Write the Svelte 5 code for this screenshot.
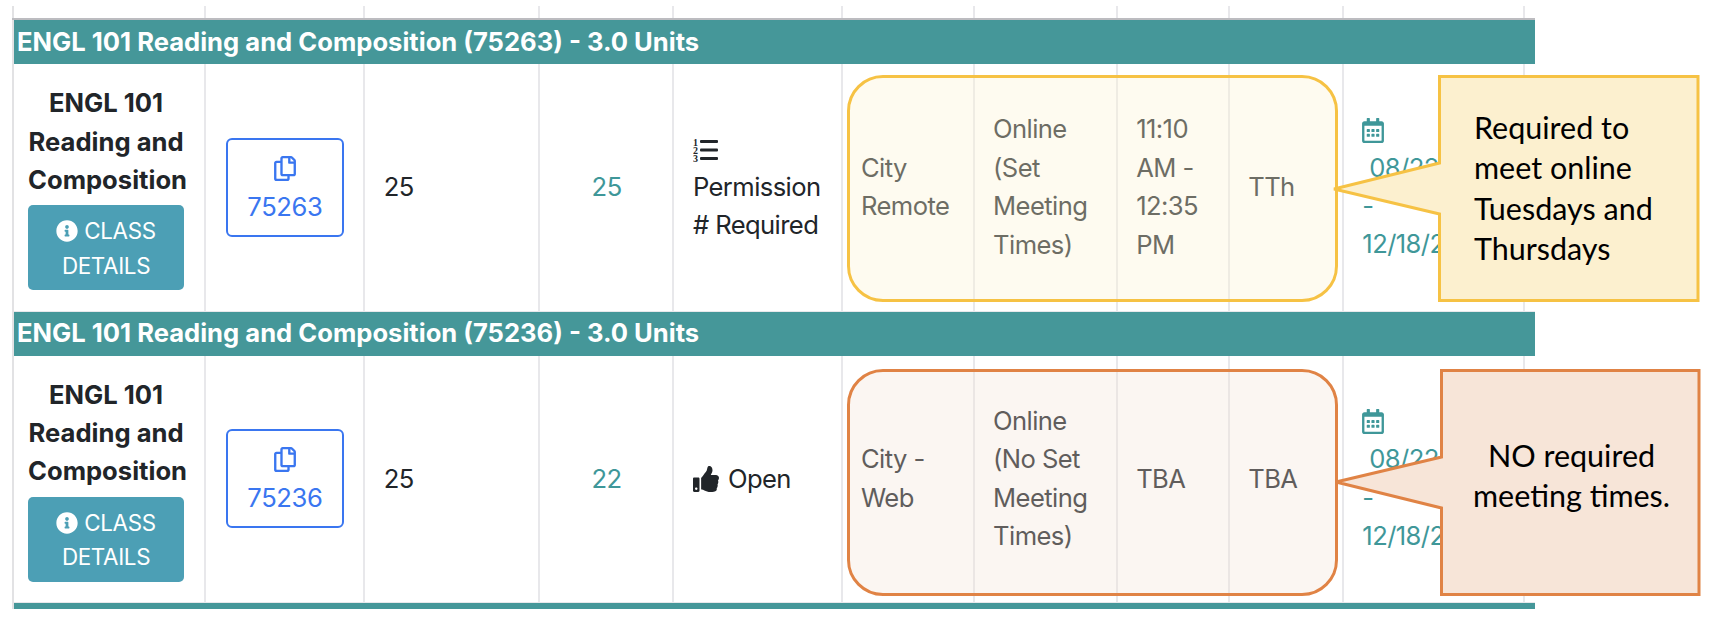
<script>
  const sections = [
    {
      crn: '75263', seats: 25, left: 25, status: 'permission',
      campus: 'City Remote', method: 'Online (Set Meeting Times)', time: '11:10 AM - 12:35 PM', days: 'TTh'
    },
    {
      crn: '75236', seats: 25, left: 22, status: 'open',
      campus: 'City - Web', method: 'Online (No Set Meeting Times)', time: 'TBA', days: 'TBA'
    }
  ]
  const columns = [192, 159, 175, 134, 168, 132, 143, 112, 114, 181, 11]
</script>

{#snippet title(crn)}
  <tr class="title"><td colspan="11">ENGL 101 Reading and Composition ({crn}) - 3.0 Units</td></tr>
{/snippet}

<div class="page">
  <table>
    <colgroup>
      {#each columns as w}<col style="width: {w}px" />{/each}
    </colgroup>
    <tbody>
      <tr class="strip">
        {#each columns as _}<td></td>{/each}
      </tr>
      {#each sections as s}
        {@render title(s.crn)}
        <tr class="row">
          <td class="course">
            <strong>ENGL 101 Reading and Composition</strong>
            <span class="details">
              <svg class="info" viewBox="0 0 512 512"><path d="M256 8C119.043 8 8 119.083 8 256c0 136.997 111.043 248 248 248s248-111.003 248-248C504 119.083 392.957 8 256 8zm0 110c23.196 0 42 18.804 42 42s-18.804 42-42 42-42-18.804-42-42 18.804-42 42-42zm56 254c0 6.627-5.373 12-12 12h-88c-6.627 0-12-5.373-12-12v-24c0-6.627 5.373-12 12-12h12v-64h-12c-6.627 0-12-5.373-12-12v-24c0-6.627 5.373-12 12-12h64c6.627 0 12 5.373 12 12v100h12c6.627 0 12 5.373 12 12v24z" /></svg>
              CLASS DETAILS
            </span>
          </td>
          <td class="crn">
            <span class="copy">
              <svg viewBox="0 0 448 512"><path d="M433.941 65.941l-51.882-51.882A48 48 0 0 0 348.118 0H176c-26.51 0-48 21.49-48 48v48H48c-26.51 0-48 21.49-48 48v320c0 26.51 21.49 48 48 48h224c26.51 0 48-21.49 48-48v-48h80c26.51 0 48-21.49 48-48V99.882a48 48 0 0 0-14.059-33.941zM266 464H54a6 6 0 0 1-6-6V150a6 6 0 0 1 6-6h74v224c0 26.51 21.49 48 48 48h96v42a6 6 0 0 1-6 6zm128-96H182a6 6 0 0 1-6-6V54a6 6 0 0 1 6-6h106v88c0 13.255 10.745 24 24 24h88v202a6 6 0 0 1-6 6zm6-256h-64V48h9.632c1.591 0 3.117.632 4.243 1.757l48.368 48.368a6 6 0 0 1 1.757 4.243V112z" /></svg>
              <span>{s.crn}</span>
            </span>
          </td>
          <td>{s.seats}</td>
          <td class="left">{s.left}</td>
          <td>
            {#if s.status === 'permission'}
              <svg class="list" viewBox="0 0 25 24">
                <text x="0" y="7.5" class="num">1</text>
                <text x="0" y="15.5" class="num">2</text>
                <text x="0" y="23.5" class="num">3</text>
                <rect x="7" y="2" width="18" height="3" rx="1" />
                <rect x="7" y="10.5" width="18" height="3" rx="1" />
                <rect x="7" y="19" width="18" height="3" rx="1" />
              </svg>
              <span class="perm">Permission # Required</span>
            {:else}
              <span class="open">
                <svg viewBox="0 0 512 512"><path d="M104 224H24c-13.255 0-24 10.745-24 24v240c0 13.255 10.745 24 24 24h80c13.255 0 24-10.745 24-24V248c0-13.255-10.745-24-24-24zM64 472c-13.255 0-24-10.745-24-24s10.745-24 24-24 24 10.745 24 24-10.745 24-24 24zM384 81.452c0 42.416-25.97 66.208-33.277 94.548h101.723c33.397 0 59.397 27.746 59.553 58.098.084 17.938-7.546 37.249-19.439 49.197l-.11.11c9.836 23.337 8.237 56.037-9.308 79.469 8.681 25.895-.069 57.704-16.382 74.757 4.298 17.598 2.244 32.575-6.148 44.632C440.202 511.587 389.616 512 346.839 512l-2.845-.001c-48.287-.017-87.806-17.598-119.56-31.725-15.957-7.099-36.821-15.887-52.651-16.178-6.54-.12-11.783-5.457-11.783-11.998v-213.77c0-3.2 1.282-6.271 3.558-8.521 39.614-39.144 56.648-80.587 89.117-113.111 14.804-14.832 20.188-37.236 25.393-58.902C282.515 39.293 291.817 0 312 0c24 0 72 8 72 81.452z" /></svg>
                Open
              </span>
            {/if}
          </td>
          <td>{s.campus}</td>
          <td>{s.method}</td>
          <td>{s.time}</td>
          <td>{s.days}</td>
          <td class="dates">
            <svg class="cal" viewBox="0 0 448 512"><path d="M148 288h-40c-6.6 0-12-5.4-12-12v-40c0-6.6 5.4-12 12-12h40c6.6 0 12 5.4 12 12v40c0 6.6-5.4 12-12 12zm108-12v-40c0-6.6-5.4-12-12-12h-40c-6.6 0-12 5.4-12 12v40c0 6.6 5.4 12 12 12h40c6.6 0 12-5.4 12-12zm96 0v-40c0-6.6-5.4-12-12-12h-40c-6.6 0-12 5.4-12 12v40c0 6.6 5.4 12 12 12h40c6.6 0 12-5.4 12-12zm-96 96v-40c0-6.6-5.4-12-12-12h-40c-6.6 0-12 5.4-12 12v40c0 6.6 5.4 12 12 12h40c6.6 0 12-5.4 12-12zm-96 0v-40c0-6.6-5.4-12-12-12h-40c-6.6 0-12 5.4-12 12v40c0 6.6 5.4 12 12 12h40c6.6 0 12-5.4 12-12zm192 0v-40c0-6.6-5.4-12-12-12h-40c-6.6 0-12 5.4-12 12v40c0 6.6 5.4 12 12 12h40c6.6 0 12-5.4 12-12zm96-260v352c0 26.5-21.5 48-48 48H48c-26.5 0-48-21.5-48-48V112c0-26.5 21.5-48 48-48h48V12c0-6.6 5.4-12 12-12h40c6.6 0 12 5.4 12 12v52h128V12c0-6.6 5.4-12 12-12h40c6.6 0 12 5.4 12 12v52h48c26.5 0 48 21.5 48 48zm-48 346V160H48v298c0 3.3 2.7 6 6 6h340c3.3 0 6-2.7 6-6z" /></svg>
            <span class="first">08/22/2022</span>
            <span>-</span>
            <span>12/18/2022</span>
          </td>
          <td></td>
        </tr>
      {/each}
      <tr class="title end"><td colspan="11"></td></tr>
    </tbody>
  </table>

  <!-- annotations drawn on top of the table -->
  <div class="mark yellow one"></div>
  <div class="note yellow one">
    <svg viewBox="0 0 367 227">
      <path d="M106.5 1.5H365V225.5H106.5V139L1 114L106.5 88Z" />
    </svg>
    <p>Required to<br />meet online<br />Tuesdays and<br />Thursdays</p>
  </div>

  <div class="mark orange two"></div>
  <div class="note orange two">
    <svg viewBox="0 0 367 227">
      <path d="M106.5 1.5H364V225.5H106.5V139L1 113L106.5 88Z" />
    </svg>
    <p>NO required<br />meeting times.</p>
  </div>
</div>

<style>
  :global(body) {
    background: #fff;
  }
  .page {
    position: relative;
    height: 634px;
    padding: 6px 0 0 12px;
    box-sizing: border-box;
    font-family: Inter, Roboto, sans-serif;
    font-size: 25.6px;
    line-height: 38.4px;
    letter-spacing: -0.023em;
    color: #212529;
    overflow: hidden;
  }
  table {
    table-layout: fixed;
    border-collapse: collapse;
    width: 1523px;
    border-left: 2px solid #e2e2e4;
  }
  td {
    padding: 0 18px 0 18.5px;
    border-left: 2px solid #e8e8eb;
    vertical-align: middle;
    overflow: hidden;
  }
  td:first-child {
    border-left: 0;
  }
  .strip td {
    height: 12px;
    padding: 0;
    border-bottom: 2px solid #bcbcc0;
  }
  .title td {
    height: 44px;
    padding: 0 3px;
    background: #459799;
    border-left: 0;
    color: #fff;
    font-weight: 700;
    letter-spacing: 0;
    white-space: nowrap;
  }
  .title.end td {
    height: 6px;
    padding: 0;
  }
  .row td {
    height: 246.5px;
    border-bottom: 1px solid #e8e8eb;
  }
  .row .course {
    text-align: center;
    padding: 0 20px 0 14px;
  }
  .course strong {
    display: block;
    font-weight: 700;
    letter-spacing: 0;
  }
  .details {
    display: block;
    margin-top: 6px;
    padding: 9px 6px 7px;
    border-radius: 5px;
    background: #4c9fb5;
    color: #fff;
    font-size: 22.4px;
    line-height: 34.5px;
    letter-spacing: -0.015em;
  }
  .info {
    width: 22px;
    height: 22px;
    vertical-align: -3px;
    fill: #fff;
  }
  .crn {
    text-align: center;
  }
  .copy {
    display: flex;
    flex-direction: column;
    align-items: center;
    width: 118px;
    box-sizing: border-box;
    margin: 0 auto;
    padding: 16px 0 9px;
    border: 2px solid #3a76f0;
    border-radius: 6px;
    color: #3a76f0;
    letter-spacing: -0.015em;
  }
  .copy svg {
    width: 22px;
    height: 25px;
    margin-bottom: 7px;
    fill: currentColor;
  }
  .left {
    text-align: center;
    color: #3f9799;
  }
  .list {
    display: block;
    width: 25px;
    height: 24px;
    margin: 8px 0 6px;
    fill: #212529;
  }
  .num {
    font-size: 10px;
    font-weight: 700;
    letter-spacing: 0;
    font-family: 'Liberation Serif', serif;
  }
  .perm {
    display: block;
  }
  .open {
    display: flex;
    align-items: center;
    gap: 9px;
  }
  .open svg {
    width: 26px;
    height: 26px;
    fill: #212529;
  }
  .dates {
    color: #3f9799;
  }
  .dates span {
    display: block;
    white-space: nowrap;
  }
  .dates .first {
    padding-left: 7px;
  }
  .cal {
    display: block;
    width: 22px;
    height: 25px;
    margin: 7px 0 6px;
    fill: currentColor;
  }
  .mark {
    position: absolute;
    left: 847px;
    width: 491px;
    height: 227px;
    box-sizing: border-box;
    border: 3px solid;
    border-radius: 36px;
    background-clip: padding-box;
  }
  .mark.yellow {
    border-color: #f6c244;
    background-color: rgba(252, 244, 212, 0.35);
  }
  .mark.orange {
    border-color: #e08345;
    background-color: rgba(242, 225, 212, 0.3);
  }
  .one {
    top: 75px;
  }
  .two {
    top: 369px;
  }
  .note {
    position: absolute;
    left: 1333px;
    width: 367px;
    height: 227px;
  }
  .note.two {
    left: 1335px;
  }
  .note svg {
    position: absolute;
    inset: 0;
    width: 100%;
    height: 100%;
    stroke-width: 3px;
  }
  .yellow path {
    fill: #fcf0cf;
    stroke: #f6c244;
  }
  .orange path {
    fill: #f7e5d8;
    stroke: #e08345;
  }
  .note p {
    position: relative;
    margin: 0;
    font-family: Lato, 'Open Sans', sans-serif;
    font-size: 30.5px;
    line-height: 40.3px;
    letter-spacing: 0;
    color: #000;
  }
  .note.one p {
    padding: 32px 0 0 141px;
  }
  .note.two p {
    padding: 66px 0 0 106px;
    text-align: center;
  }
</style>
